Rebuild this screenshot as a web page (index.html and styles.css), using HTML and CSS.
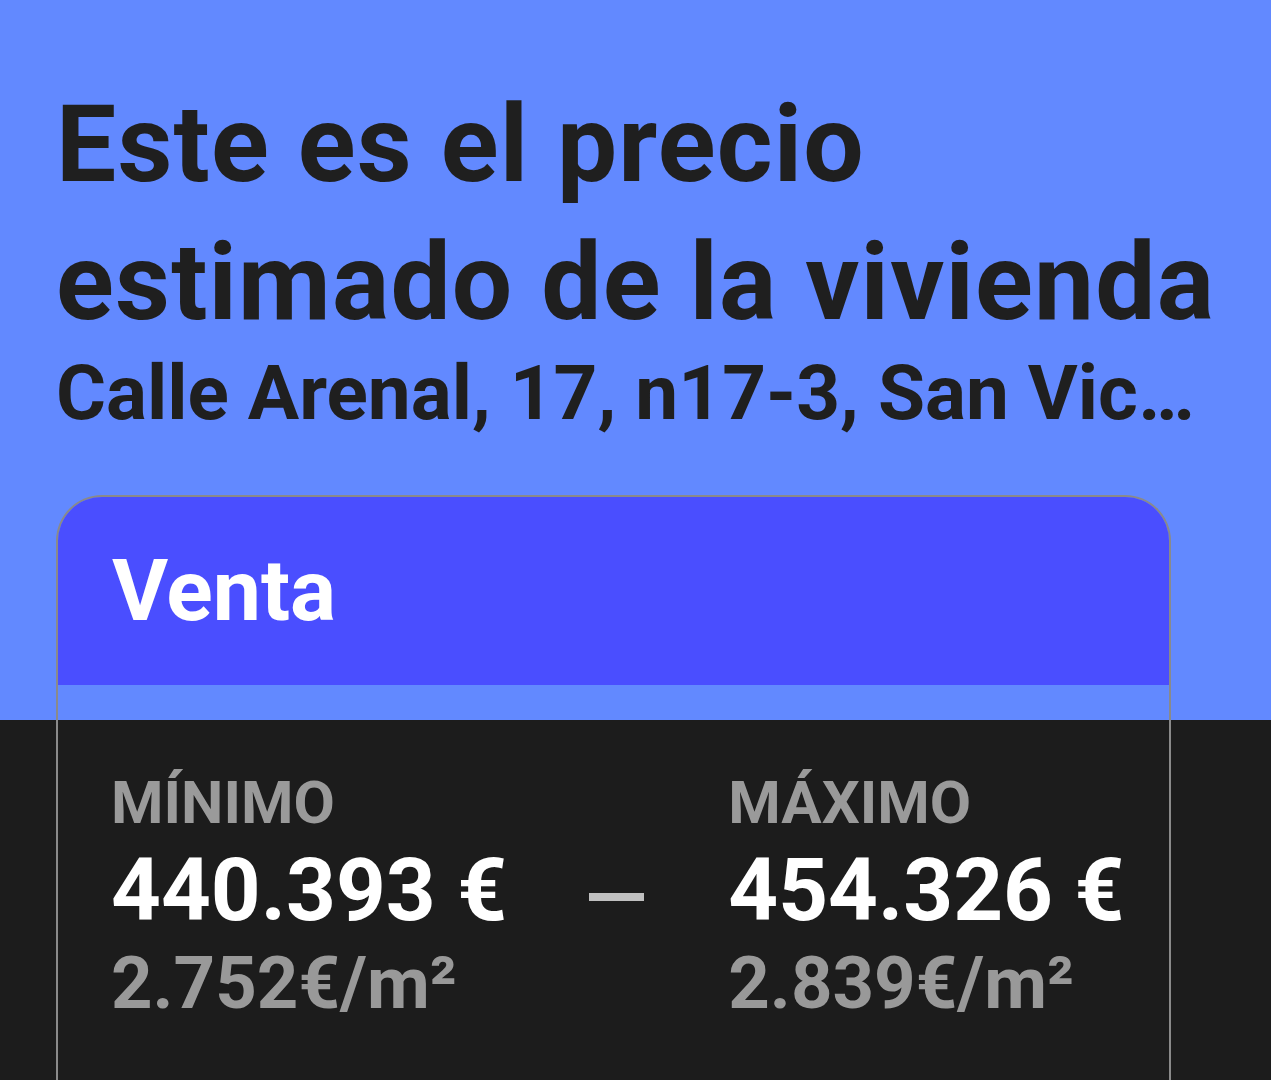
FILE: index.html
```html
<!DOCTYPE html>
<html lang="es">
<head>
<meta charset="utf-8">
<title>Precio estimado</title>
<link rel="stylesheet" href="styles.css">
</head>
<body>
<main class="page">
  <h1 class="title">Este es el precio estimado de la vivienda</h1>
  <p class="address">Calle Arenal, 17, n17-3, San Vic…</p>
  <section class="card">
    <header class="card-head">
      <h2 class="card-title">Venta</h2>
    </header>
    <div class="card-body">
      <div class="range">
        <div class="label">MÍNIMO</div>
        <div class="spacer"></div>
        <div class="label">MÁXIMO</div>
        <div class="price">440.393 €</div>
        <div class="dash"><span class="dash-bar"></span></div>
        <div class="price">454.326 €</div>
        <div class="sqm">2.752€/m²</div>
        <div class="spacer"></div>
        <div class="sqm">2.839€/m²</div>
      </div>
    </div>
  </section>
</main>
</body>
</html>
```

FILE: styles.css
```css
html, body {
  margin: 0;
  padding: 0;
}
body {
  width: 1271px;
  height: 1080px;
  overflow: hidden;
  font-family: Roboto, "Liberation Sans", Arial, sans-serif;
  background: linear-gradient(to bottom, #6289ff 0, #6289ff 720px, #1c1c1c 720px, #1c1c1c 100%);
}
.page {
  padding: 76px 0 0 56px;
}
.title {
  margin: 0;
  font-size: 107px;
  line-height: 138px;
  letter-spacing: 1.2px;
  font-weight: 700;
  color: #1f1f1f;
  width: 1200px;
}
.address {
  margin: 0;
  font-size: 76.5px;
  line-height: 82px;
  font-weight: 700;
  color: #1f1f1f;
  white-space: nowrap;
}
.card {
  margin-top: 61px;
  width: 1111px;
  height: 700px;
  border: 2px solid #8a8a8a;
  border-bottom: none;
  border-radius: 46px 46px 0 0;
  overflow: hidden;
}
.card-head {
  background: #4a4eff;
  height: 188px;
  display: flex;
  align-items: center;
  padding: 0 0 0 54px;
}
.card-title {
  margin: 0;
  font-size: 86px;
  line-height: 90px;
  font-weight: 700;
  color: #ffffff;
}
.card-body {
  padding: 84px 0 0 53px;
}
.range {
  display: grid;
  grid-template-columns: auto 57px auto;
  column-gap: 82px;
  justify-content: start;
}
.label {
  font-size: 60px;
  line-height: 68px;
  font-weight: 700;
  color: #9a9a9a;
}
.price {
  font-size: 87px;
  line-height: 106px;
  font-weight: 700;
  color: #ffffff;
  white-space: nowrap;
}
.sqm {
  font-size: 72.5px;
  line-height: 81px;
  font-weight: 700;
  color: #999999;
  white-space: nowrap;
}
.dash {
  display: flex;
  align-items: center;
  padding-top: 14px;
}
.dash-bar {
  display: block;
  width: 55px;
  height: 8px;
  background: #c0c0c0;
}
```
